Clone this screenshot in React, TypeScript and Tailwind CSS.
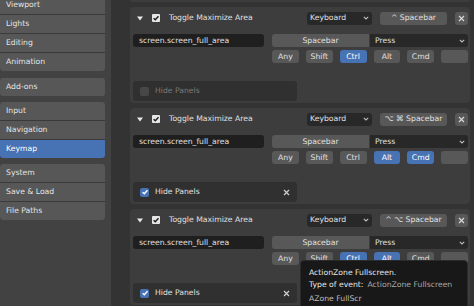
import React from "react";

const Tri = () => (
  <svg width="6" height="5" viewBox="0 0 6 5" className="block">
    <path d="M0 0.5 L6 0.5 L3 4.5 Z" fill="#e8e8e8" />
  </svg>
);

const Chevron = () => (
  <svg width="6" height="4" viewBox="0 0 6 4" className="block">
    <path d="M0.8 0.8 L3 3 L5.2 0.8" stroke="#bdbdbd" strokeWidth="1.1" fill="none" />
  </svg>
);

const XIcon = ({ color = "#d8d8d8" }: { color?: string }) => (
  <svg width="7" height="7" viewBox="0 0 7 7" className="block">
    <path d="M1 1 L6 6 M6 1 L1 6" stroke={color} strokeWidth="1.2" />
  </svg>
);

const Check = ({ color }: { color: string }) => (
  <svg width="8" height="8" viewBox="0 0 8 8" className="block">
    <path d="M1.6 4.2 L3.3 5.8 L6.5 2.2" stroke={color} strokeWidth="1.4" fill="none" />
  </svg>
);

type CardProps = {
  keyLabel: string;
  mods: boolean[];
  hideEnabled: boolean;
};

const modNames = ["Any", "Shift", "Ctrl", "Alt", "Cmd", ""];

function Card({ keyLabel, mods, hideEnabled }: CardProps) {
  return (
    <div className="h-[96px] shrink-0 rounded-[4px] bg-[#3d3d3d] flex flex-col pl-[3px] pr-[2px]">
      <div className="h-[14px] mt-[4px] flex items-center">
        <div className="w-[174px] flex-none flex items-center">
          <div className="ml-[4px]">
            <Tri />
          </div>
          <div className="ml-[9px] w-[8px] h-[8px] rounded-[1px] bg-[#e6e6e6] flex items-center justify-center">
            <Check color="#1a1a1a" />
          </div>
          <span className="ml-[9px]">Toggle Maximize Area</span>
        </div>
        <div className="w-[65px] h-[13px] rounded-[3px] bg-[#282828] flex items-center justify-between pl-[3px] pr-[3px]">
          <span>Keyboard</span>
          <Chevron />
        </div>
        <div className="ml-[8px] w-[67px] h-[13px] rounded-[3px] bg-[#585858] flex items-center justify-center">
          {keyLabel}
        </div>
        <div className="ml-[8px] w-[13px] h-[13px] rounded-[3px] bg-[#585858] flex items-center justify-center">
          <XIcon />
        </div>
      </div>
      <div className="h-[13px] mt-[9px] flex items-center">
        <div className="w-[131px] h-[13px] rounded-[3px] bg-[#1f1f1f] flex items-center pl-[6px]">
          screen.screen_full_area
        </div>
        <div className="ml-[8px] w-[97px] h-[13px] rounded-l-[3px] bg-[#585858] flex items-center justify-center">
          Spacebar
        </div>
        <div className="ml-[1px] w-[98px] h-[13px] rounded-r-[3px] bg-[#282828] flex items-center justify-between pl-[5px] pr-[3px]">
          <span>Press</span>
          <Chevron />
        </div>
      </div>
      <div className="h-[13px] mt-[3px] ml-[139px] w-[196px] grid grid-cols-6 gap-[7px]">
        {modNames.map((m, i) => (
          <div
            key={i}
            className={
              mods[i]
                ? "h-[13px] rounded-[3px] bg-[#4772b3] text-white flex items-center justify-center"
                : "h-[13px] rounded-[3px] bg-[#585858] flex items-center justify-center"
            }
          >
            {m}
          </div>
        ))}
      </div>
      <div className="mt-[18px] w-[164px] h-[20px] rounded-[3px] bg-[#303030] flex items-center pl-[7px]">
        {hideEnabled ? (
          <div className="w-[9px] h-[9px] rounded-[2px] bg-[#4772b3] flex items-center justify-center">
            <Check color="#ffffff" />
          </div>
        ) : (
          <div className="w-[9px] h-[9px] rounded-[2px] bg-[#474747]" />
        )}
        <span className={hideEnabled ? "ml-[6px]" : "ml-[6px] text-[#7a7a7a]"}>Hide Panels</span>
        {hideEnabled && (
          <div className="ml-auto mr-[7px]">
            <XIcon color="#cfcfcf" />
          </div>
        )}
      </div>
    </div>
  );
}

const NavItem = ({ label, active }: { label: string; active?: boolean }) => (
  <div
    className={
      active
        ? "h-[18px] bg-[#4772b3] text-white flex items-center pl-[6px]"
        : "h-[18px] bg-[#575757] text-[#e4e4e4] flex items-center pl-[6px]"
    }
  >
    {label}
  </div>
);

const NavGroup = ({ items, active, className }: { items: string[]; active?: string; className?: string }) => (
  <div className={"flex flex-col gap-px rounded-[3px] overflow-hidden bg-[#3a3a3a] " + (className ?? "")}>
    {items.map((it) => (
      <NavItem key={it} label={it} active={it === active} />
    ))}
  </div>
);

export default function App() {
  return (
    <div className="relative w-[474px] h-[306px] overflow-hidden flex bg-[#333333] font-['DejaVu_Sans',sans-serif] text-[7.7px] leading-none text-[#e0e0e0]">
      <nav className="w-[111px] shrink-0 bg-[#424242] pr-[6px] flex flex-col">
        <NavGroup className="-mt-[4px] rounded-tl-none" items={["Viewport", "Lights", "Editing", "Animation"]} />
        <NavGroup className="mt-[7px]" items={["Add-ons"]} />
        <NavGroup className="mt-[6px]" items={["Input", "Navigation", "Keymap"]} active="Keymap" />
        <NavGroup className="mt-[6px]" items={["System", "Save & Load", "File Paths"]} />
      </nav>
      <main className="flex-1 flex flex-col pl-[19px] pr-[4px]">
        <div className="h-[2px] shrink-0 rounded-b-[4px] bg-[#3d3d3d]" />
        <div className="h-[5px] shrink-0" />
        <Card keyLabel="^ Spacebar" mods={[false, false, true, false, false, false]} hideEnabled={false} />
        <div className="h-[5px] shrink-0" />
        <Card keyLabel="⌥ ⌘ Spacebar" mods={[false, false, false, true, true, false]} hideEnabled={true} />
        <div className="h-[5px] shrink-0" />
        <Card keyLabel="^ ⌥ Spacebar" mods={[false, false, true, true, false, false]} hideEnabled={true} />
      </main>
      <div className="absolute left-[300px] top-[260px] w-[168px] h-[60px] rounded-[4px] bg-[#181818] border border-[#2a2a2a] pl-[8px] pt-[8px] flex flex-col">
        <div className="text-[#e6e6e6]">ActionZone Fullscreen.</div>
        <div className="mt-[4px] flex">
          <span className="text-[#e6e6e6]">Type of event:</span>
          <span className="ml-[4px] text-[#a8a8a8]">ActionZone Fullscreen</span>
        </div>
        <div className="mt-[7px] text-[#bdbdbd]">AZone FullScr</div>
      </div>
    </div>
  );
}
